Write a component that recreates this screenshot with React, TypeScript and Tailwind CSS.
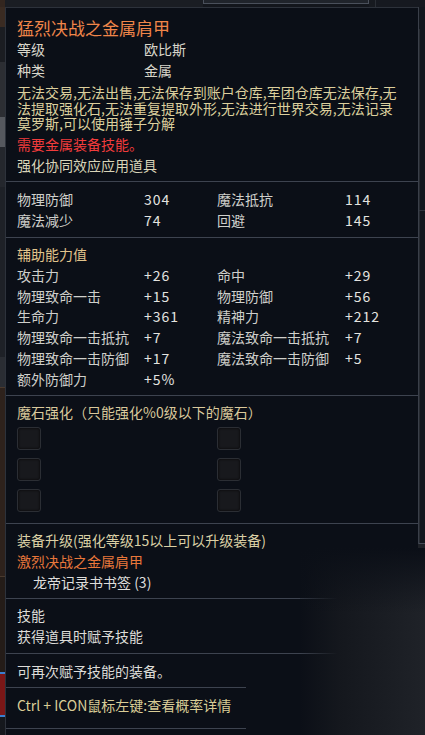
import React from 'react'

const font = "font-['Noto_Sans_CJK_SC','Noto_Sans',sans-serif]"

const Divider = ({ w = 'w-full' }: { w?: string }) => (
  <div className={`${w} h-px bg-[#3d434f]`} />
)

const statsMain = [
  ['物理防御', '304', '魔法抵抗', '114'],
  ['魔法减少', '74', '回避', '145'],
]

const statsExtra = [
  ['攻击力', '+26', '命中', '+29'],
  ['物理致命一击', '+15', '物理防御', '+56'],
  ['生命力', '+361', '精神力', '+212'],
  ['物理致命一击抵抗', '+7', '魔法致命一击抵抗', '+7'],
  ['物理致命一击防御', '+17', '魔法致命一击防御', '+5'],
  ['额外防御力', '+5%', '', ''],
]

const StatRow = ({ row, leading }: { row: string[]; leading: string }) => (
  <div className={`grid grid-cols-[127px_73px_128px_1fr] ${leading} text-[14px]`}>
    <span className="text-[#cfcfcb] whitespace-nowrap">{row[0]}</span>
    <span className="text-[#e4e4e0] tracking-[1px]">{row[1]}</span>
    <span className="text-[#cfcfcb] whitespace-nowrap">{row[2]}</span>
    <span className="text-[#e4e4e0] tracking-[1px]">{row[3]}</span>
  </div>
)

const Slot = () => (
  <div className="w-6 h-[23px] rounded-[3px] border border-[#2b2e34] bg-[#18191d] shadow-[inset_0_0_3px_rgba(0,0,0,0.8)]" />
)

const App = () => {
  return (
    <div className={`relative w-[425px] h-[735px] overflow-hidden bg-[#13161c] flex flex-col ${font}`}>
      {/* strip above the tooltip */}
      <div className="h-[7px] flex shrink-0">
        <div className="w-[5px] bg-[#33261f]" />
        <div className="w-[198px] bg-[#1a1d23]" />
        <div className="w-[166px] h-[4px] border-x border-b border-[#4a505b] bg-[#20242b]" />
        <div className="w-[6px] bg-[#171a20]" />
        <div className="flex-1 border-l border-[#2a2e35] bg-[#161920]" />
      </div>

      <div className="flex flex-1">
        {/* game ui peeking out on the left */}
        <div className="w-[5px] flex flex-col">
          <div className="h-[20px] bg-[#3a2b22]" />
          <div className="h-[35px] bg-[#1b1d22]" />
          <div className="h-[55px] bg-[#2c2e33]" />
          <div className="h-[30px] bg-[#55585e]" />
          <div className="h-[40px] bg-[#24272d]" />
          <div className="h-[170px] bg-[#1e2127]" />
          <div className="h-[30px] bg-[#2a2d33]" />
          <div className="h-[190px] bg-[#2e221c] border-y border-[#4a3a2e]" />
          <div className="h-[95px] bg-[#241c18]" />
          <div className="h-[45px] bg-[#7a1717] border-y-2 border-[#3a7fd0]" />
          <div className="flex-1 bg-[#15181d]" />
        </div>

        {/* tooltip */}
        <div className="w-[413px] flex flex-col border-t border-l border-[#2d323b] bg-[#0b0f17]">
          <div className="pl-[11px] pt-[9px] pb-[5px]">
            <div className="text-[17px] leading-[22px] text-[#f0864a]">猛烈决战之金属肩甲</div>
            <div className="grid grid-cols-[127px_1fr] text-[14px] leading-[21px] text-[#d9d6ca]">
              <span>等级</span>
              <span>欧比斯</span>
              <span>种类</span>
              <span>金属</span>
            </div>
            <p className="mt-[4px] max-w-[384px] text-[14px] leading-[15.5px] text-[#dccf9d]">
              无法交易,无法出售,无法保存到账户仓库,军团仓库无法保存,无法提取强化石,无法重复提取外形,无法进行世界交易,无法记录莫罗斯,可以使用锤子分解
            </p>
            <div className="mt-[2.5px] text-[14px] leading-[21px] text-[#f23c3c]">需要金属装备技能。</div>
            <div className="text-[14px] leading-[21px] text-[#d9d4b8]">强化协同效应应用道具</div>
          </div>
          <Divider />

          <div className="pl-[11px] pt-[7px] pb-[6px]">
            {statsMain.map((r) => (
              <StatRow key={r[0]} row={r} leading="leading-[21px]" />
            ))}
          </div>
          <Divider />

          <div className="pl-[11px] pt-[6px] pb-[5px]">
            <div className="text-[14px] leading-[20.8px] text-[#e1c48c]">辅助能力值</div>
            {statsExtra.map((r) => (
              <StatRow key={r[0]} row={r} leading="leading-[20.8px]" />
            ))}
          </div>
          <Divider />

          <div className="pl-[11px] pt-[6px] pb-[11px]">
            <div className="text-[14px] leading-[21px] text-[#dac99c]">魔石强化（只能强化%0级以下的魔石）</div>
            <div className="mt-[4px] grid grid-cols-[200px_1fr] gap-y-[8px]">
              <Slot />
              <Slot />
              <Slot />
              <Slot />
              <Slot />
              <Slot />
            </div>
          </div>
          <Divider />

          <div className="pl-[11px] pt-[6px] pb-[5px] text-[14px] leading-[21px]">
            <div className="text-[#dacfa5]">装备升级(强化等级15以上可以升级装备)</div>
            <div className="text-[#e8773b]">激烈决战之金属肩甲</div>
            <div className="pl-4 text-[#dedddb]">龙帝记录书书签 (3)</div>
          </div>
          <Divider />

          <div className="pl-[11px] pt-[6px] pb-[6px] text-[14px] leading-[21px] text-[#dddcd8]">
            <div>技能</div>
            <div>获得道具时赋予技能</div>
          </div>
          <Divider />

          <div className="pl-[11px] pt-[7px] pb-[5px] text-[14px] leading-[21px] text-[#dddcd8]">
            可再次赋予技能的装备。
          </div>
          <Divider w="w-[240px]" />

          <div className="pl-[11px] pt-[7px] pb-[12px] text-[14px] leading-[21px] text-[#d9cd96]">
            Ctrl + ICON鼠标左键:查看概率详情
          </div>
          <Divider w="w-[240px]" />
          <div className="flex-1" />
        </div>

        {/* background on the right */}
        <div className="flex-1 flex flex-col">
          <div className="h-[537px] border-l border-[#3a3f49] bg-[#13171e] flex flex-col">
            <div className="h-[22px]" />
            <div className="h-[181px] border-l border-[#262a31]" />
            <div className="h-px bg-[#2f343d]" />
            <div className="flex-1 border-l border-[#262a31]" />
            <div className="h-px bg-[#454b56]" />
          </div>
          <div className="flex-1 bg-[#1e2127]" />
        </div>
      </div>

      {/* soft fade over the lower right corner */}
      <div className="absolute left-[300px] top-[548px] right-0 bottom-0 bg-[linear-gradient(to_bottom,#0b0f17_0%,rgba(11,15,23,0)_35%),linear-gradient(to_right,rgba(11,15,23,0)_0%,#14171d_30%,#1f2228_100%)]" />
    </div>
  )
}

export default App
